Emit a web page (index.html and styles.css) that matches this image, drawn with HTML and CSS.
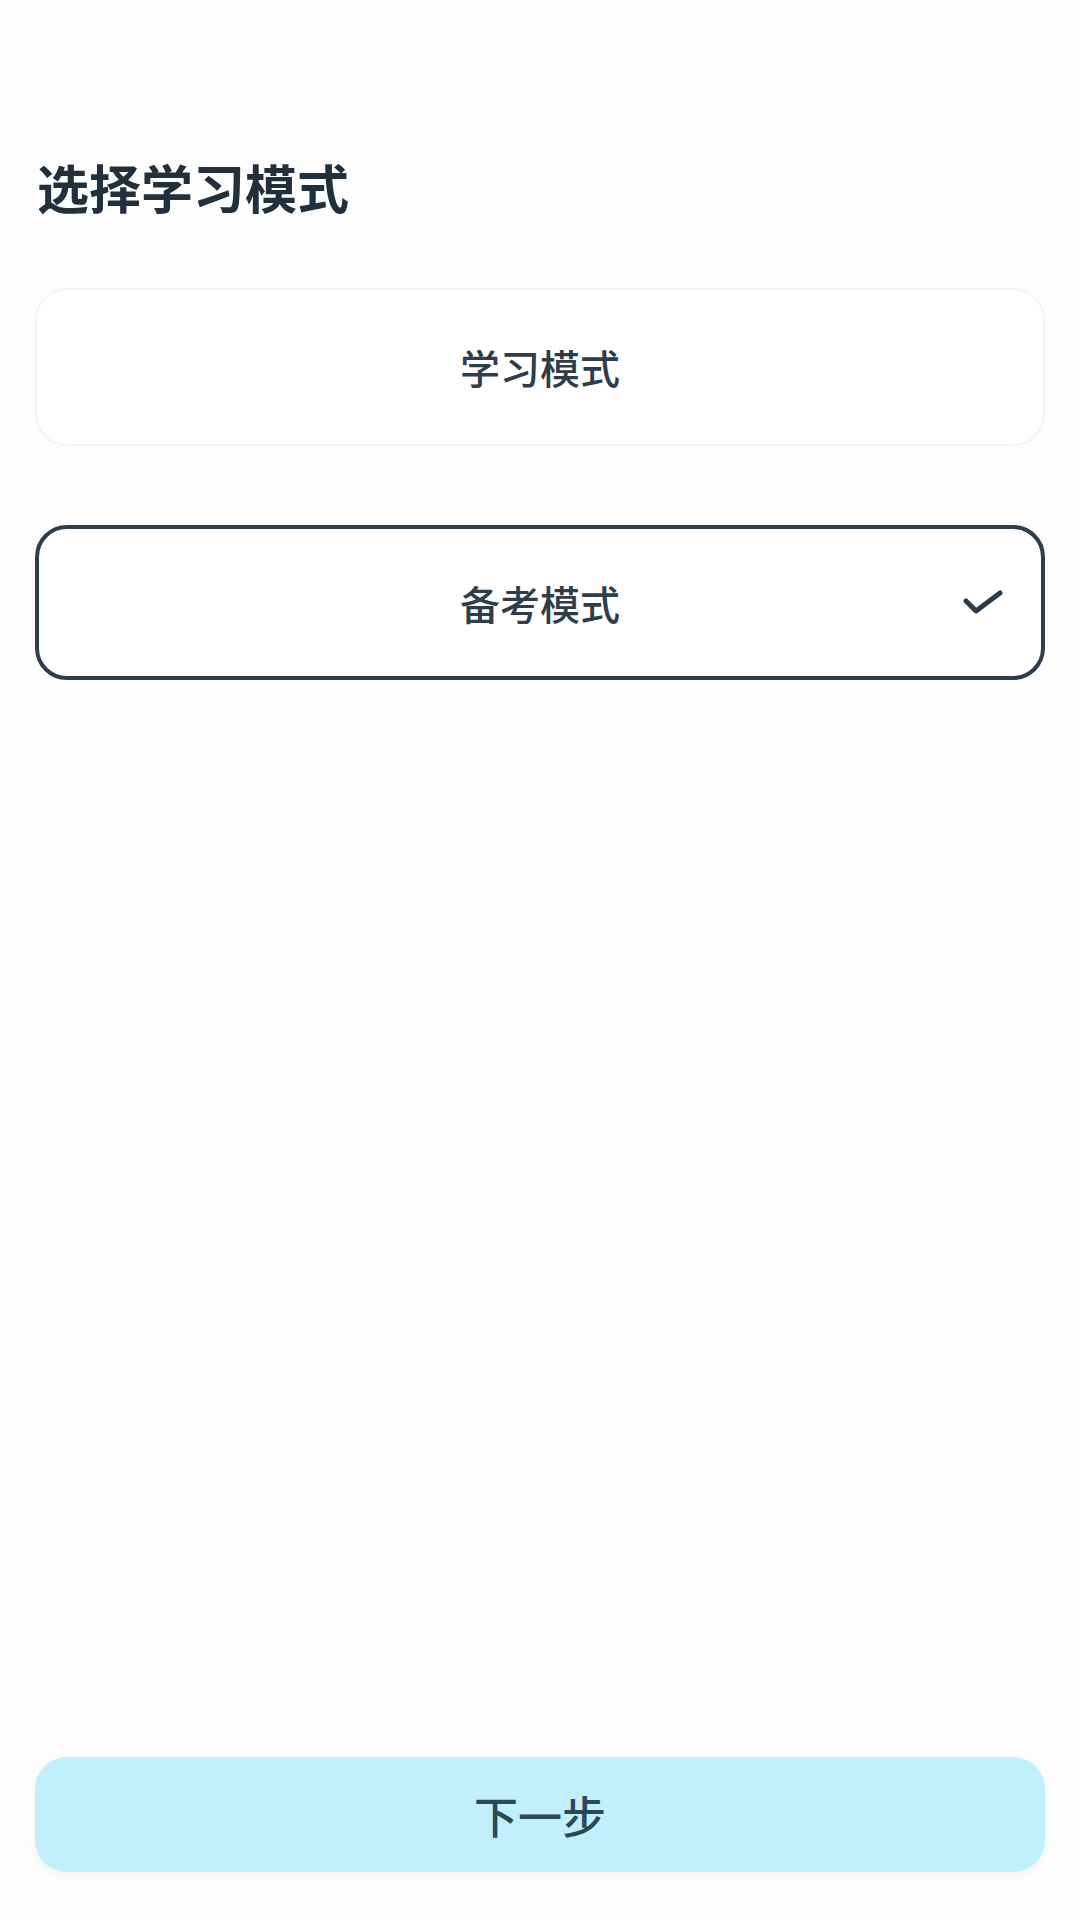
FILE: index.html
```html
<!DOCTYPE html>
<html lang="zh-CN">
<head>
<meta charset="utf-8">
<title>选择学习模式</title>
<link rel="stylesheet" href="styles.css">
</head>
<body>
<main class="page">
  <h1 class="title">选择学习模式</h1>
  <div class="options">
    <div class="option">学习模式</div>
    <div class="option option--selected">备考模式
      <svg class="check" width="40" height="28" viewBox="0 0 40 28" aria-hidden="true">
        <polyline points="3,13 13,23 37,5" fill="none" stroke="#2b3a48" stroke-width="5" stroke-linecap="round" stroke-linejoin="round"/>
      </svg>
    </div>
  </div>
  <button class="next">下一步</button>
</main>
</body>
</html>
```
FILE: styles.css
```css
* { box-sizing: border-box; }
html, body {
  margin: 0;
  padding: 0;
  background: #fdfdfd;
}
body {
  font-family: "Noto Sans CJK SC", "Noto Sans", sans-serif;
  color: #2b3a48;
}
.page {
  min-height: 1920px;
  display: flex;
  flex-direction: column;
  padding: 0 35px 48px;
}
.title {
  margin: 155px 0 0 2px;
  font-size: 52px;
  line-height: 64px;
  font-weight: 700;
  color: #22303d;
}
.options {
  margin-top: 69px;
  display: flex;
  flex-direction: column;
  gap: 79px;
}
.option {
  position: relative;
  height: 158px;
  border-radius: 32px;
  background: #ffffff;
  border: 2px solid #f3f4f5;
  display: flex;
  align-items: center;
  justify-content: center;
  font-size: 40px;
  font-weight: 500;
  color: #2f3c49;
}
.option--selected {
  border: 4px solid #2f3e4d;
  height: 155px;
}
.check {
  position: absolute;
  right: 38px;
  top: 50%;
  margin-top: -15px;
}
.next {
  margin-top: auto;
  height: 115px;
  border: none;
  border-radius: 32px;
  background: #c2effc;
  font-family: "Noto Sans CJK SC", "Noto Sans", sans-serif;
  font-size: 44px;
  font-weight: 500;
  color: #2a4858;
  box-shadow: 0 4px 8px rgba(180, 200, 210, 0.15);
}
```
